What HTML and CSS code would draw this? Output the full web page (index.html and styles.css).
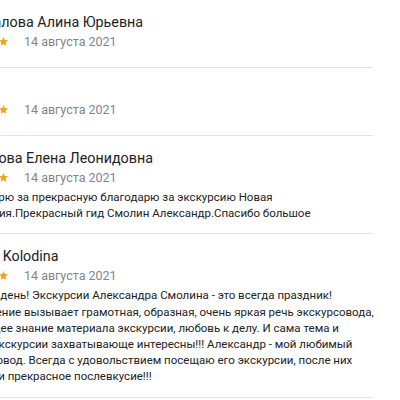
FILE: index.html
```html
<!DOCTYPE html>
<html lang="ru">
<head>
  <meta charset="UTF-8" />
  <meta name="viewport" content="width=device-width, initial-scale=1.0" />
  <title>Отзывы</title>
  <link rel="stylesheet" href="styles.css">
</head>
<body>
  <div class="reviews">

    <div class="review">
      <div class="name">Стрекалова Алина Юрьевна</div>
      <div class="meta">
        <span class="stars">
          <svg viewBox="0 0 24 24"><path d="M12 2l2.9 6.9 7.1.6-5.4 4.7 1.6 7.3L12 17.8l-6.2 3.7 1.6-7.3L2 9.5l7.1-.6z"/></svg>
          <svg viewBox="0 0 24 24"><path d="M12 2l2.9 6.9 7.1.6-5.4 4.7 1.6 7.3L12 17.8l-6.2 3.7 1.6-7.3L2 9.5l7.1-.6z"/></svg>
          <svg viewBox="0 0 24 24"><path d="M12 2l2.9 6.9 7.1.6-5.4 4.7 1.6 7.3L12 17.8l-6.2 3.7 1.6-7.3L2 9.5l7.1-.6z"/></svg>
          <svg viewBox="0 0 24 24"><path d="M12 2l2.9 6.9 7.1.6-5.4 4.7 1.6 7.3L12 17.8l-6.2 3.7 1.6-7.3L2 9.5l7.1-.6z"/></svg>
          <svg viewBox="0 0 24 24"><path d="M12 2l2.9 6.9 7.1.6-5.4 4.7 1.6 7.3L12 17.8l-6.2 3.7 1.6-7.3L2 9.5l7.1-.6z"/></svg>
        </span>
        <span class="date">14 августа 2021</span>
      </div>
    </div>

    <div class="review">
      <div class="name">Ира</div>
      <div class="meta">
        <span class="stars">
          <svg viewBox="0 0 24 24"><path d="M12 2l2.9 6.9 7.1.6-5.4 4.7 1.6 7.3L12 17.8l-6.2 3.7 1.6-7.3L2 9.5l7.1-.6z"/></svg>
          <svg viewBox="0 0 24 24"><path d="M12 2l2.9 6.9 7.1.6-5.4 4.7 1.6 7.3L12 17.8l-6.2 3.7 1.6-7.3L2 9.5l7.1-.6z"/></svg>
          <svg viewBox="0 0 24 24"><path d="M12 2l2.9 6.9 7.1.6-5.4 4.7 1.6 7.3L12 17.8l-6.2 3.7 1.6-7.3L2 9.5l7.1-.6z"/></svg>
          <svg viewBox="0 0 24 24"><path d="M12 2l2.9 6.9 7.1.6-5.4 4.7 1.6 7.3L12 17.8l-6.2 3.7 1.6-7.3L2 9.5l7.1-.6z"/></svg>
          <svg viewBox="0 0 24 24"><path d="M12 2l2.9 6.9 7.1.6-5.4 4.7 1.6 7.3L12 17.8l-6.2 3.7 1.6-7.3L2 9.5l7.1-.6z"/></svg>
        </span>
        <span class="date">14 августа 2021</span>
      </div>
    </div>

    <div class="review">
      <div class="name">Смирнова Елена Леонидовна</div>
      <div class="meta">
        <span class="stars">
          <svg viewBox="0 0 24 24"><path d="M12 2l2.9 6.9 7.1.6-5.4 4.7 1.6 7.3L12 17.8l-6.2 3.7 1.6-7.3L2 9.5l7.1-.6z"/></svg>
          <svg viewBox="0 0 24 24"><path d="M12 2l2.9 6.9 7.1.6-5.4 4.7 1.6 7.3L12 17.8l-6.2 3.7 1.6-7.3L2 9.5l7.1-.6z"/></svg>
          <svg viewBox="0 0 24 24"><path d="M12 2l2.9 6.9 7.1.6-5.4 4.7 1.6 7.3L12 17.8l-6.2 3.7 1.6-7.3L2 9.5l7.1-.6z"/></svg>
          <svg viewBox="0 0 24 24"><path d="M12 2l2.9 6.9 7.1.6-5.4 4.7 1.6 7.3L12 17.8l-6.2 3.7 1.6-7.3L2 9.5l7.1-.6z"/></svg>
          <svg viewBox="0 0 24 24"><path d="M12 2l2.9 6.9 7.1.6-5.4 4.7 1.6 7.3L12 17.8l-6.2 3.7 1.6-7.3L2 9.5l7.1-.6z"/></svg>
        </span>
        <span class="date">14 августа 2021</span>
      </div>
      <p class="text">Благодарю за прекрасную благодарю за экскурсию Новая<br>Голландия.Прекрасный гид Смолин Александр.Спасибо большое</p>
    </div>

    <div class="review">
      <div class="name">Natalia Kolodina</div>
      <div class="meta">
        <span class="stars">
          <svg viewBox="0 0 24 24"><path d="M12 2l2.9 6.9 7.1.6-5.4 4.7 1.6 7.3L12 17.8l-6.2 3.7 1.6-7.3L2 9.5l7.1-.6z"/></svg>
          <svg viewBox="0 0 24 24"><path d="M12 2l2.9 6.9 7.1.6-5.4 4.7 1.6 7.3L12 17.8l-6.2 3.7 1.6-7.3L2 9.5l7.1-.6z"/></svg>
          <svg viewBox="0 0 24 24"><path d="M12 2l2.9 6.9 7.1.6-5.4 4.7 1.6 7.3L12 17.8l-6.2 3.7 1.6-7.3L2 9.5l7.1-.6z"/></svg>
          <svg viewBox="0 0 24 24"><path d="M12 2l2.9 6.9 7.1.6-5.4 4.7 1.6 7.3L12 17.8l-6.2 3.7 1.6-7.3L2 9.5l7.1-.6z"/></svg>
          <svg viewBox="0 0 24 24"><path d="M12 2l2.9 6.9 7.1.6-5.4 4.7 1.6 7.3L12 17.8l-6.2 3.7 1.6-7.3L2 9.5l7.1-.6z"/></svg>
        </span>
        <span class="date">14 августа 2021</span>
      </div>
      <p class="text">Добрый день! Экскурсии Александра Смолина - это всегда праздник!<br>Восхищение вызывает грамотная, образная, очень яркая речь экскурсовода,<br>блестящее знание материала экскурсии, любовь к делу. И сама тема и<br>сюжет экскурсии захватывающе интересны!!! Александр - мой любимый<br>экскурсовод. Всегда с удовольствием посещаю его экскурсии, после них<br>эмоции и прекрасное послевкусие!!!</p>
    </div>

  </div>
</body>
</html>
```

FILE: styles.css
```css
body {
  margin: 0;
  background: #fff;
  font-family: Roboto, "Liberation Sans", sans-serif;
  color: #222;
  overflow: hidden;
}
.reviews {
  margin-left: -46px;
  width: 419px;
}
.review {
  padding: 13px 0 12px;
  border-bottom: 1px solid #e3e3e3;
}
.name {
  font-size: 14.3px;
  line-height: 18px;
  color: #222;
  white-space: nowrap;
}
.meta {
  display: flex;
  align-items: center;
  gap: 15px;
  height: 20px;
  margin-bottom: 4px;
}
.stars {
  display: flex;
}
.stars svg {
  width: 11px;
  height: 11px;
  fill: #f4a31b;
}
.date {
  font-size: 12.5px;
  color: #80868b;
}
.text {
  margin: -2px 0 0;
  font-size: 11.5px;
  line-height: 16.2px;
  white-space: nowrap;
}
```
